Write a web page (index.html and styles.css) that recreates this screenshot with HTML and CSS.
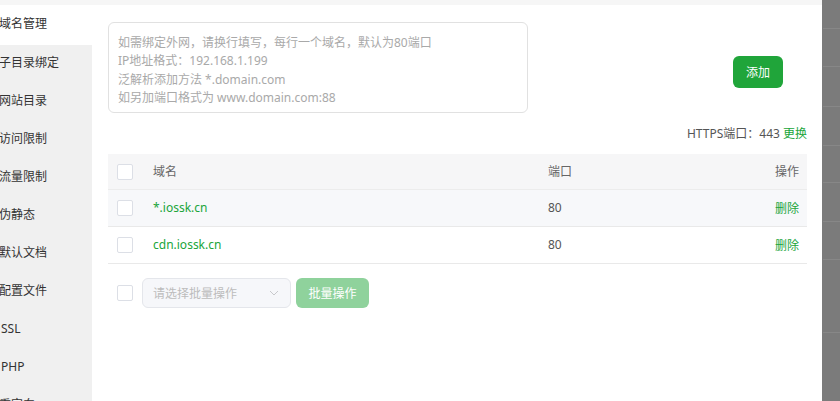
FILE: index.html
```html
<!DOCTYPE html>
<html lang="zh-CN">
<head>
<meta charset="utf-8">
<title>域名管理</title>
<link rel="stylesheet" href="styles.css">
</head>
<body>
<div class="page">
  <div class="dialog">
    <div class="titlebar"></div>
    <div class="dialog-body">
      <ul class="sidebar">
        <li class="nav-item active"><span>域名管理</span></li>
        <li class="nav-item second"><span>子目录绑定</span></li>
        <li class="nav-item"><span>网站目录</span></li>
        <li class="nav-item"><span>访问限制</span></li>
        <li class="nav-item"><span>流量限制</span></li>
        <li class="nav-item"><span>伪静态</span></li>
        <li class="nav-item"><span>默认文档</span></li>
        <li class="nav-item"><span>配置文件</span></li>
        <li class="nav-item latin"><span>SSL</span></li>
        <li class="nav-item latin"><span>PHP</span></li>
        <li class="nav-item"><span>重定向</span></li>
      </ul>
      <div class="main">
        <div class="add-row">
          <div class="textarea">
            <div>如需绑定外网，请换行填写，每行一个域名，默认为80端口</div>
            <div>IP地址格式：192.168.1.199</div>
            <div>泛解析添加方法 *.domain.com</div>
            <div>如另加端口格式为 www.domain.com:88</div>
          </div>
          <button class="btn-add">添加</button>
        </div>
        <div class="https-row">HTTPS端口：443 <a class="link">更换</a></div>
        <table class="domain-table">
          <thead>
            <tr>
              <th class="col-check"><span class="checkbox"></span></th>
              <th class="col-name">域名</th>
              <th class="col-port">端口</th>
              <th class="col-op">操作</th>
            </tr>
          </thead>
          <tbody>
            <tr class="hover">
              <td class="col-check"><span class="checkbox"></span></td>
              <td class="col-name"><a class="link">*.iossk.cn</a></td>
              <td class="col-port">80</td>
              <td class="col-op"><a class="link">删除</a></td>
            </tr>
            <tr>
              <td class="col-check"><span class="checkbox"></span></td>
              <td class="col-name"><a class="link">cdn.iossk.cn</a></td>
              <td class="col-port">80</td>
              <td class="col-op"><a class="link">删除</a></td>
            </tr>
          </tbody>
        </table>
        <div class="batch-row">
          <span class="checkbox"></span>
          <div class="select">
            <span class="placeholder">请选择批量操作</span>
            <svg class="chevron" width="10" height="6" viewBox="0 0 10 6"><path d="M1 1 L5 5 L9 1" fill="none" stroke="#c8c9cc" stroke-width="1"/></svg>
          </div>
          <button class="btn-batch">批量操作</button>
        </div>
      </div>
    </div>
  </div>
  <div class="behind">
    <div class="behind-row r1"></div>
    <div class="behind-row r2"></div>
    <div class="behind-row r3"></div>
    <div class="behind-row r4"></div>
    <div class="behind-row r5"></div>
    <div class="behind-row r6"></div>
    <div class="behind-row r7"></div>
    <div class="behind-row r8"></div>
  </div>
</div>
</body>
</html>
```

FILE: styles.css
```css
* { box-sizing: border-box; }
html, body {
  margin: 0;
  padding: 0;
  width: 840px;
  height: 401px;
  overflow: hidden;
  background: #7b7b7b;
  font-family: "Noto Sans", "Noto Sans CJK SC", sans-serif;
  font-size: 12px;
  color: #555;
}
.page {
  display: flex;
  width: 840px;
  height: 401px;
}
.dialog {
  width: 822px;
  height: 401px;
  background: #fff;
  display: flex;
  flex-direction: column;
  overflow: hidden;
}
.titlebar {
  height: 5px;
  background: #f6f6f6;
  flex: none;
}
.dialog-body {
  display: flex;
  flex: 1;
  min-height: 0;
}
.sidebar {
  list-style: none;
  margin: 0;
  padding: 0;
  width: 92px;
  background: #f0f0f0;
  flex: none;
  overflow: hidden;
}
.nav-item {
  height: 38px;
  line-height: 38px;
  color: #333;
  white-space: nowrap;
  font-size: 12px;
}
.nav-item span { margin-left: -1px; }
.nav-item.latin span { margin-left: 1px; }
.nav-item.active {
  background: #fff;
  height: 40px;
  line-height: 38px;
}
.nav-item.second { height: 37px; line-height: 36px; }
.main {
  flex: 1;
  padding: 17px 15px 0 16px;
}
.add-row {
  display: flex;
  justify-content: space-between;
  align-items: flex-start;
}
.textarea {
  width: 420px;
  height: 91px;
  border: 1px solid #e1e1e1;
  border-radius: 6px;
  padding: 11px 9px 0;
  color: #a9a9a9;
  line-height: 18.4px;
  font-size: 12px;
}
.btn-add {
  margin-top: 34px;
  margin-right: 24px;
  width: 50px;
  height: 32px;
  border: none;
  border-radius: 6px;
  background: #20a53a;
  color: #fff;
  font-family: inherit;
  font-size: 12px;
  padding: 0;
}
.https-row {
  margin-top: 11px;
  height: 20px;
  line-height: 20px;
  text-align: right;
  color: #555;
  font-size: 12px;
}
.link { color: #20a53a; text-decoration: none; }
.domain-table {
  margin-top: 10px;
  width: 100%;
  border-collapse: collapse;
  font-size: 12px;
}
.domain-table th {
  background: #f6f6f7;
  height: 35px;
  font-weight: normal;
  color: #666;
  text-align: left;
  border-bottom: 1px solid #ececec;
}
.domain-table td {
  height: 37px;
  color: #555;
  border-bottom: 1px solid #e9e9e9;
}
.domain-table tr.hover td { background: #f7f8fa; }
.col-check { width: 44px; padding-left: 9px; }
.col-check .checkbox { vertical-align: middle; }
.col-port { width: 180px; }
.domain-table .col-op { text-align: right; padding-right: 8px; width: 80px; }
.checkbox {
  display: inline-block;
  width: 16px;
  height: 16px;
  border: 1px solid #dcdfe6;
  border-radius: 2px;
  background: #fff;
}
.batch-row {
  margin-top: 14px;
  display: flex;
  align-items: center;
  padding-left: 9px;
}
.select {
  margin-left: 9px;
  width: 149px;
  height: 30px;
  border: 1px solid #e4e6eb;
  border-radius: 6px;
  background: #f6f7fa;
  display: flex;
  align-items: center;
  justify-content: space-between;
  padding: 0 11px 0 10px;
}
.placeholder { color: #bcbcbc; }
.btn-batch {
  margin-left: 5px;
  width: 73px;
  height: 30px;
  border: none;
  border-radius: 6px;
  background: #8fd29c;
  color: #fff;
  font-family: inherit;
  font-size: 12px;
  padding: 0;
}
.behind {
  flex: 1;
  display: flex;
  flex-direction: column;
  margin-left: 1px;
}
.behind-row { border-bottom: 1px solid #878787; flex: none; }
.r1 { height: 29px; }
.r2 { height: 38px; }
.r3 { height: 40px; }
.r4 { height: 39px; }
.r5 { height: 37px; }
.r6 { height: 39px; }
.r7 { height: 38px; }
.r8 { height: 73px; }
```
